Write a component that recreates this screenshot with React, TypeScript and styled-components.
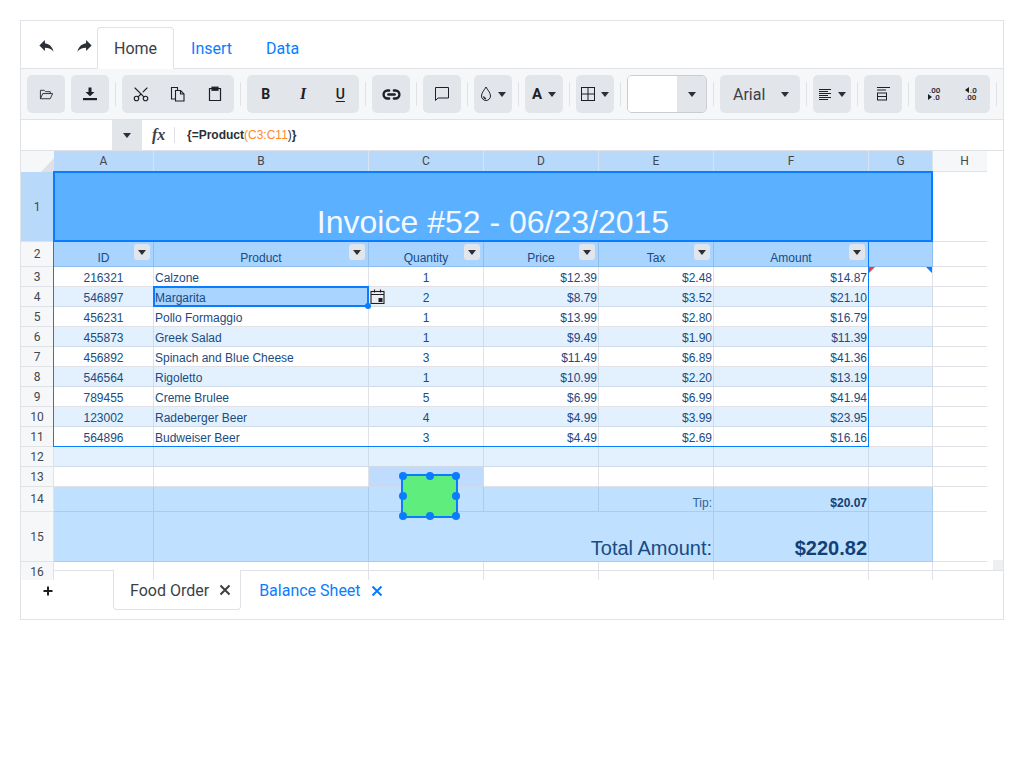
import React from "react";
import styled, {createGlobalStyle} from "styled-components";
import {Scissors, Link2} from "lucide-react";

const GlobalStyle = createGlobalStyle`
	html, body {
		margin: 0;
		padding: 0;
		background: #fff;
		font-family: "Roboto", "Liberation Sans", sans-serif;
	}
`;

const BLUE = "#0a7cff";
const LINE = "#e0e2e8";
const BTN = "#e2e5ea";
const INK = "#1d2026";
const CELL_INK = "#1a4b82";

const COLS = ["A", "B", "C", "D", "E", "F", "G", "H"];

const ORDERS = [
  ["216321", "Calzone", "1", "$12.39", "$2.48", "$14.87"],
  ["546897", "Margarita", "2", "$8.79", "$3.52", "$21.10"],
  ["456231", "Pollo Formaggio", "1", "$13.99", "$2.80", "$16.79"],
  ["455873", "Greek Salad", "1", "$9.49", "$1.90", "$11.39"],
  ["456892", "Spinach and Blue Cheese", "3", "$11.49", "$6.89", "$41.36"],
  ["546564", "Rigoletto", "1", "$10.99", "$2.20", "$13.19"],
  ["789455", "Creme Brulee", "5", "$6.99", "$6.99", "$41.94"],
  ["123002", "Radeberger Beer", "4", "$4.99", "$3.99", "$23.95"],
  ["564896", "Budweiser Beer", "3", "$4.49", "$2.69", "$16.16"],
];

const HEADINGS = ["ID", "Product", "Quantity", "Price", "Tax", "Amount"];
const HANDLES = [
  [0, 0], [50, 0], [100, 0],
  [0, 50], [100, 50],
  [0, 100], [50, 100], [100, 100],
];

const Caret = () => <CaretShape/>;

const Filter = () => (
  <FilterButton><CaretShape/></FilterButton>
);

const Row = ({n, children}: {n: number; children: React.ReactNode}) => (
  <>
    <RowHead $active={n === 1}>{n}</RowHead>
    {children}
  </>
);

export default function App() {
  return (
    <Page>
      <GlobalStyle/>
      <Sheet>
        <TabBar>
          <HistoryButton>
            <svg width="19" height="19" viewBox="0 0 24 24" fill="#2b2f36"><path d="M10 9V5l-7 7 7 7v-4.1c5 0 8.5 1.6 11 5.1-1-5-4-10-11-11z"/></svg>
          </HistoryButton>
          <HistoryButton>
            <svg width="19" height="19" viewBox="0 0 24 24" fill="#2b2f36"><path d="M14 9V5l7 7-7 7v-4.1c-5 0-8.5 1.6-11 5.1 1-5 4-10 11-11z"/></svg>
          </HistoryButton>
          <Tabs>
            <Tab $active>Home</Tab>
            <Tab>Insert</Tab>
            <Tab>Data</Tab>
          </Tabs>
        </TabBar>

        <Toolbar>
          <Group>
            <ToolButton>
              <svg width="15" height="15" viewBox="0 0 16 16" fill="none" stroke="#2b2f36" strokeWidth="1"><path d="M1.5 12.5v-9h4L7 5h5v2"/><path d="M1.5 12.5 4 7h10.5L12 12.5z"/></svg>
            </ToolButton>
          </Group>
          <Group>
            <ToolButton>
              <svg width="16" height="16" viewBox="0 0 16 16" fill="#1d2026"><path d="M6.5 1.5h3V6h3L8 10.2 3.5 6h3z"/><rect x="1" y="12" width="14" height="2.2"/></svg>
            </ToolButton>
          </Group>
          <Sep/>
          <Group $width={112}>
            <ToolButton><Scissors size={18} color="#1d2026" strokeWidth={1.5} style={{transform: "rotate(-90deg)"}}/></ToolButton>
            <ToolButton>
              <svg width="16" height="16" viewBox="0 0 16 16" fill="none" stroke="#1d2026" strokeWidth="1.1"><path d="M5 13H1.500V1.500h6V4"/><path d="M5.500 4.500h5l3.500 3.500v7H5.500z"/><path d="M10.500 4.500V8H14"/></svg>
            </ToolButton>
            <ToolButton>
              <svg width="16" height="16" viewBox="0 0 16 16" fill="none" stroke="#1d2026" strokeWidth="1.2"><path d="M5 2.500H2.500v12h11v-12H11"/><rect x="5" y="1.200" width="6" height="3" fill="#1d2026"/></svg>
            </ToolButton>
          </Group>
          <Sep/>
          <Group $width={112}>
            <ToolButton><BoldLabel>B</BoldLabel></ToolButton>
            <ToolButton><ItalicLabel>I</ItalicLabel></ToolButton>
            <ToolButton><UnderLabel>U</UnderLabel></ToolButton>
          </Group>
          <Sep/>
          <Group>
            <ToolButton><Link2 size={19} color="#1d2026" strokeWidth={3}/></ToolButton>
          </Group>
          <Sep/>
          <Group>
            <ToolButton>
              <svg width="16" height="16" viewBox="0 0 16 16" fill="none" stroke="#1d2026" strokeWidth="1"><path d="M1.500 1.500h13v10.500H4L1.500 14.500z"/></svg>
            </ToolButton>
          </Group>
          <Sep/>
          <Group>
            <SplitButton>
              <svg width="12" height="16" viewBox="0 0 12 16" fill="none" stroke="#1d2026" strokeWidth="1"><path d="M6 1C4.500 4 1.500 6.500 1.500 10a4.500 4.500 0 0 0 9 0C10.500 6.500 7.500 4 6 1z"/><path d="M3.500 10.500c.3 1.300 1.200 2 2.500 2.200" strokeWidth="1.400"/></svg>
              <Caret/>
            </SplitButton>
          </Group>
          <Sep/>
          <Group>
            <SplitButton><FontColorLabel>A</FontColorLabel><Caret/></SplitButton>
          </Group>
          <Sep/>
          <Group>
            <SplitButton>
              <svg width="14" height="14" viewBox="0 0 14 14" fill="none" stroke="#1d2026" strokeWidth="1"><rect x=".5" y=".5" width="13" height="13"/><path d="M7 .5v13M.5 7h13"/></svg>
              <Caret/>
            </SplitButton>
          </Group>
          <Sep/>
          <SizeCombo>
            <SizeInput/>
            <SizeArrow><Caret/></SizeArrow>
          </SizeCombo>
          <Sep/>
          <FontButton><span>Arial</span><Caret/></FontButton>
          <Sep/>
          <Group>
            <SplitButton>
              <svg width="13" height="13" viewBox="0 0 13 13" stroke="#1d2026" strokeWidth="1"><path d="M0 1.500h12M0 3.500h9M0 5.500h12M0 7.500h9M0 9.500h12M0 11.500h9"/></svg>
              <Caret/>
            </SplitButton>
          </Group>
          <Sep/>
          <Group>
            <ToolButton>
              <svg width="15" height="14" viewBox="0 0 15 14" fill="none" stroke="#1d2026" strokeWidth="1"><path d="M1 .5h13M1 3h9"/><rect x="1.500" y="6" width="9" height="7"/><path d="M1.500 9.500h9"/></svg>
            </ToolButton>
          </Group>
          <Sep/>
          <Group $width={75}>
            <ToolButton>
              <svg width="14" height="22" viewBox="0 0 14 22" fill={INK} fontSize="8" fontFamily="Roboto, sans-serif" fontWeight="500">
                <text x="2" y="10">.00</text>
                <path d="M1 11l4 3-4 3z"/>
                <text x="6" y="17">.0</text>
              </svg>
            </ToolButton>
            <ToolButton>
              <svg width="14" height="22" viewBox="0 0 14 22" fill={INK} fontSize="8" fontFamily="Roboto, sans-serif" fontWeight="500">
                <path d="M5 4 1 7l4 3z"/>
                <text x="6" y="10">.0</text>
                <text x="1" y="17">.00</text>
              </svg>
            </ToolButton>
          </Group>
          <Sep/>
        </Toolbar>

        <FormulaBar>
          <NameBox/>
          <NameArrow><Caret/></NameArrow>
          <FxLabel>fx</FxLabel>
          <FormulaText>
            <b>{"{=Product"}</b><Ref>(C3:C11</Ref>)<b>{"}"}</b>
          </FormulaText>
        </FormulaBar>

        <GridWrap>
          <Grid>
            <Corner/>
            {COLS.map((c) => <ColHead key={c} $active={c !== "H"}>{c}</ColHead>)}

            <Row n={1}>
              <TitleCell>Invoice #52 - 06/23/2015</TitleCell>
              <Cell/>
            </Row>

            <Row n={2}>
              {HEADINGS.map((h) => (
                <HeadingCell key={h}>{h}<Filter/></HeadingCell>
              ))}
              <HeadingCell/>
              <Cell/>
            </Row>

            {ORDERS.map((o, i) => (
              <Row key={o[0]} n={i + 3}>
                <Cell $bg={i % 2 ? "#e3f1fe" : undefined} $align="center">{o[0]}</Cell>
                <Cell $bg={i === 1 ? "#a8d4ff" : i % 2 ? "#e3f1fe" : undefined}>{o[1]}</Cell>
                <Cell $bg={i % 2 ? "#e3f1fe" : undefined} $align="center">{o[2]}</Cell>
                <Cell $bg={i % 2 ? "#e3f1fe" : undefined} $align="right">{o[3]}</Cell>
                <Cell $bg={i % 2 ? "#e3f1fe" : undefined} $align="right">{o[4]}</Cell>
                <Cell $bg={i % 2 ? "#e3f1fe" : undefined} $align="right">{o[5]}</Cell>
                <Cell $bg={i % 2 ? "#e3f1fe" : undefined}/>
                <Cell/>
              </Row>
            ))}

            <Row n={12}>
              {COLS.slice(0, 7).map((c) => <Cell key={c} $bg="#e3f1fe"/>)}
              <Cell/>
            </Row>

            <Row n={13}>
              <Cell/><Cell/><Cell $bg="#bfdcff"/><Cell/><Cell/><Cell/><Cell/><Cell/>
            </Row>

            <Row n={14}>
              <TotalCell/><TotalCell/><TotalCell/><TotalCell/>
              <TotalCell $align="right" $muted>Tip:</TotalCell>
              <TotalCell $align="right"><b>$20.07</b></TotalCell>
              <TotalCell/>
              <Cell/>
            </Row>

            <Row n={15}>
              <TotalCell/><TotalCell/>
              <GrandLabel>Total Amount:</GrandLabel>
              <GrandAmount>$220.82</GrandAmount>
              <TotalCell/>
              <Cell/>
            </Row>

            <Row n={16}>
              {COLS.map((c) => <Cell key={c}/>)}
            </Row>
          </Grid>

          <TitleOutline/>
          <RangeOutline/>
          <CellCursor/>
          <DatePicker>
            <svg width="15" height="15" viewBox="0 0 15 15" fill="none" stroke="#1d2026" strokeWidth="1.100"><rect x="1" y="2.500" width="13" height="12"/><path d="M1 5.500h13M4.500 .5v3M10.500 .5v3"/><rect x="8.500" y="9" width="4" height="4" fill="#1d2026" stroke="none"/></svg>
          </DatePicker>
          <CursorDot/>
          <CommentMark $side="left"/>
          <CommentMark $side="right"/>
          <Shape>
            {HANDLES.map(([x, y]) => <Handle key={`${x}-${y}`} $x={x} $y={y}/>)}
          </Shape>
          <ScrollCorner/>
        </GridWrap>

        <SheetBar>
          <AddSheet>
            <svg width="12" height="12" viewBox="0 0 12 12" stroke="#1d2026" strokeWidth="2"><path d="M6 1.500v9M1.500 6h9"/></svg>
          </AddSheet>
          <SheetTab $active>
            Food Order
            <svg width="12" height="12" viewBox="0 0 12 12" stroke="#3b3f46" strokeWidth="2"><path d="M1.500 1.500l9 9M10.500 1.500l-9 9"/></svg>
          </SheetTab>
          <SheetTab>
            Balance Sheet
            <svg width="12" height="12" viewBox="0 0 12 12" stroke={BLUE} strokeWidth="2"><path d="M1.500 1.500l9 9M10.500 1.500l-9 9"/></svg>
          </SheetTab>
          <SheetRest/>
        </SheetBar>
      </Sheet>
    </Page>
  );
}

const Page = styled.div`
	padding: 20px;
	width: 1024px;
	height: 768px;
	box-sizing: border-box;
	overflow: hidden;
`;

const Sheet = styled.div`
	width: 984px;
	height: 600px;
	box-sizing: border-box;
	border: 1px solid ${LINE};
	display: flex;
	flex-direction: column;
`;

const TabBar = styled.div`
	display: flex;
	align-items: flex-end;
	height: 48px;
	box-sizing: border-box;
	padding-left: 6px;
	border-bottom: 1px solid ${LINE};
`;

const HistoryButton = styled.div`
	width: 38px;
	height: 38px;
	margin-bottom: 4px;
	display: flex;
	align-items: center;
	justify-content: center;
`;

const Tabs = styled.div`
	display: flex;
	margin-left: -6px;
`;

const Tab = styled.div<{ $active?: boolean }>`
	height: 42px;
	box-sizing: border-box;
	padding: 0 16px;
	margin-bottom: -1px;
	display: flex;
	align-items: center;
	font-size: 16px;
	color: ${(p) => (p.$active ? "#3b3f46" : BLUE)};
	background: ${(p) => (p.$active ? "#fff" : "transparent")};
	border: 1px solid ${(p) => (p.$active ? LINE : "transparent")};
	border-bottom: 1px solid ${(p) => (p.$active ? "#fff" : "transparent")};
	border-radius: 4px 4px 0 0;
`;

const Toolbar = styled.div`
	height: 51px;
	box-sizing: border-box;
	padding-left: 6px;
	display: flex;
	align-items: center;
	overflow: hidden;
	background: #f6f7f9;
	border-bottom: 1px solid ${LINE};
	& > * {
		flex-shrink: 0;
	}
`;

const Group = styled.div<{ $width?: number }>`
	display: flex;
	width: ${(p) => p.$width || 38}px;
	height: 38px;
	background: ${BTN};
	border-radius: 5px;
	& + & {
		margin-left: 6px;
	}
`;

const ToolButton = styled.div`
	flex: 1;
	height: 38px;
	display: flex;
	align-items: center;
	justify-content: center;
	color: ${INK};
`;

const SplitButton = styled(ToolButton)`
	gap: 6px;
`;

const Sep = styled.div`
	width: 1px;
	height: 24px;
	margin: 0 6px;
	background: #dfe1e6;
`;

const CaretShape = styled.span`
	display: inline-block;
	width: 0;
	height: 0;
	border-left: 4px solid transparent;
	border-right: 4px solid transparent;
	border-top: 5.5px solid #2b2f36;
`;

const BoldLabel = styled.span`
	font-size: 14px;
	font-weight: 700;
`;

const ItalicLabel = styled.span`
	font-family: "Liberation Serif", serif;
	font-size: 16px;
	font-style: italic;
	font-weight: 700;
`;

const UnderLabel = styled.span`
	font-size: 14px;
	font-weight: 500;
	text-decoration: underline;
	text-underline-offset: 2px;
`;

const FontColorLabel = styled.span`
	font-size: 15px;
	font-weight: 700;
`;

const SizeCombo = styled.div`
	width: 80px;
	height: 38px;
	box-sizing: border-box;
	display: flex;
	border: 1px solid #c9ccd3;
	border-radius: 5px;
	overflow: hidden;
`;

const SizeInput = styled.div`
	width: 49px;
	background: #fff;
`;

const SizeArrow = styled.div`
	flex: 1;
	display: flex;
	align-items: center;
	justify-content: center;
	background: ${BTN};
`;

const FontButton = styled.div`
	width: 80px;
	height: 38px;
	box-sizing: border-box;
	padding: 0 11px 0 13px;
	display: flex;
	align-items: center;
	justify-content: space-between;
	background: ${BTN};
	border-radius: 5px;
	font-size: 16px;
	color: #3b3f46;
`;

const FormulaBar = styled.div`
	height: 31px;
	box-sizing: border-box;
	display: flex;
	align-items: center;
	border-bottom: 1px solid ${LINE};
`;

const NameBox = styled.div`
	width: 91px;
`;

const NameArrow = styled.div`
	width: 30px;
	height: 30px;
	display: flex;
	align-items: center;
	justify-content: center;
	background: ${BTN};
`;

const FxLabel = styled.div`
	width: 33px;
	height: 16px;
	line-height: 16px;
	box-sizing: border-box;
	padding-left: 10px;
	border-right: 1px solid #dfe1e6;
	font-family: "Liberation Serif", serif;
	font-style: italic;
	font-weight: 700;
	font-size: 16px;
	color: #3b3f46;
`;

const FormulaText = styled.div`
	margin-left: 12px;
	font-family: "Liberation Sans", Arial, sans-serif;
	font-size: 12px;
	color: #2b2f36;
`;

const Ref = styled.span`
	color: #ff8a2b;
`;

const GridWrap = styled.div`
	position: relative;
	height: 429px;
	overflow: hidden;
`;

const Grid = styled.div`
	display: grid;
	grid-template-columns: 33px 100px 215px 115px 115px 115px 155px 64px 64px;
	grid-template-rows: 21px 70px 25px repeat(11, 20px) 25px 50px 20px;
	width: 966px;
	overflow: hidden;
	font-family: "Liberation Sans", Arial, sans-serif;
	font-size: 12px;
`;

const Corner = styled.div`
	position: relative;
	box-sizing: border-box;
	background: #f6f7f9;
	&::after {
		content: "";
		position: absolute;
		right: 0;
		bottom: 0;
		border-bottom: 14px solid #dfe1e6;
		border-left: 13px solid transparent;
	}
`;

const ColHead = styled.div<{ $active?: boolean }>`
	box-sizing: border-box;
	display: flex;
	align-items: center;
	justify-content: center;
	font-family: "Roboto", sans-serif;
	color: #43474f;
	background: ${(p) => (p.$active ? "#b9d9fb" : "#f6f7f9")};
	border-right: 1px solid ${(p) => (p.$active ? "#d5e3f2" : LINE)};
	border-bottom: 1px solid ${LINE};
`;

const RowHead = styled.div<{ $active?: boolean }>`
	box-sizing: border-box;
	display: flex;
	align-items: center;
	justify-content: center;
	font-family: "Roboto", sans-serif;
	color: #43474f;
	background: ${(p) => (p.$active ? "#b9d9fb" : "#f6f7f9")};
	border-right: 1px solid ${LINE};
	border-bottom: 1px solid ${LINE};
`;

const Cell = styled.div<{ $bg?: string; $align?: "left" | "center" | "right" }>`
	box-sizing: border-box;
	min-width: 0;
	padding: 0 1px;
	display: flex;
	align-items: flex-end;
	justify-content: ${(p) => (p.$align === "center" ? "center" : p.$align === "right" ? "flex-end" : "flex-start")};
	line-height: 16px;
	white-space: nowrap;
	color: ${CELL_INK};
	background: ${(p) => p.$bg || "#fff"};
	border-right: 1px solid ${(p) => (p.$bg ? "#cfdbe8" : LINE)};
	border-bottom: 1px solid ${(p) => (p.$bg ? "#cfdbe8" : LINE)};
`;

const TitleCell = styled.div`
	grid-column: span 7;
	box-sizing: border-box;
	padding-right: 1px;
	display: flex;
	align-items: flex-end;
	justify-content: center;
	font-size: 32px;
	line-height: 40px;
	color: #f4f9ff;
	background: #5bb0ff;
`;

const HeadingCell = styled.div`
	position: relative;
	box-sizing: border-box;
	display: flex;
	align-items: flex-end;
	justify-content: center;
	line-height: 15px;
	color: ${CELL_INK};
	background: #a8d4ff;
	border-right: 1px solid #8dbfee;
	border-bottom: 1px solid #8dbfee;
`;

const FilterButton = styled.div`
	position: absolute;
	top: 2px;
	right: 3px;
	width: 16px;
	height: 16px;
	display: flex;
	align-items: center;
	justify-content: center;
	background: ${BTN};
	border-radius: 3px;
`;

const TotalCell = styled(Cell)<{ $muted?: boolean }>`
	background: #bfe0ff;
	border-right: 1px solid #a9cdee;
	border-bottom: 1px solid #a9cdee;
	color: ${(p) => (p.$muted ? "#2f6496" : "#123f75")};
`;

const GrandLabel = styled(TotalCell)`
	grid-column: span 3;
	justify-content: flex-end;
	font-size: 20px;
	line-height: 25px;
	color: ${CELL_INK};
`;

const GrandAmount = styled(TotalCell)`
	justify-content: flex-end;
	font-size: 20px;
	line-height: 25px;
	font-weight: 700;
`;

const TitleOutline = styled.div`
	position: absolute;
	left: 32px;
	top: 20px;
	width: 880px;
	height: 71px;
	box-sizing: border-box;
	border: 2px solid ${BLUE};
	pointer-events: none;
`;

const RangeOutline = styled.div`
	position: absolute;
	left: 32px;
	top: 90px;
	width: 816px;
	height: 206px;
	box-sizing: border-box;
	border: 1px solid ${BLUE};
	pointer-events: none;
`;

const CellCursor = styled.div`
	position: absolute;
	left: 132px;
	top: 135px;
	width: 216px;
	height: 21px;
	box-sizing: border-box;
	border: 2px solid ${BLUE};
`;

const CursorDot = styled.div`
	position: absolute;
	left: 344px;
	top: 152px;
	width: 6px;
	height: 6px;
	border-radius: 50%;
	background: ${BLUE};
`;

const DatePicker = styled.div`
	position: absolute;
	left: 348px;
	top: 136px;
	width: 16px;
	height: 18px;
	display: flex;
	align-items: center;
	justify-content: center;
	background: #eceef1;
`;

const CommentMark = styled.div<{ $side: "left" | "right" }>`
	position: absolute;
	top: 116px;
	width: 0;
	height: 0;
	${(p) => (p.$side === "left"
    ? `left: 848px; border-top: 6px solid #e8404a; border-right: 6px solid transparent;`
    : `left: 905px; border-top: 6px solid ${BLUE}; border-left: 6px solid transparent;`)}
`;

const Shape = styled.div`
	position: absolute;
	left: 380px;
	top: 323px;
	width: 57px;
	height: 44px;
	box-sizing: border-box;
	background: #5fee7d;
	border: 2px solid ${BLUE};
`;

const Handle = styled.div<{ $x: number; $y: number }>`
	position: absolute;
	left: ${(p) => p.$x}%;
	top: ${(p) => p.$y}%;
	width: 8px;
	height: 8px;
	margin: -4px 0 0 -4px;
	border-radius: 50%;
	background: ${BLUE};
`;

const ScrollCorner = styled.div`
	position: absolute;
	right: 0;
	top: 409px;
	width: 10px;
	height: 10px;
	background: #eeeff1;
`;

const SheetBar = styled.div`
	position: relative;
	height: 49px;
	margin-top: -10px;
	display: flex;
	align-items: flex-start;
`;

const AddSheet = styled.div`
	position: relative;
	width: 92px;
	height: 40px;
	box-sizing: border-box;
	padding: 1px 0 0 21px;
	display: flex;
	align-items: center;
	&::before {
		content: "";
		position: absolute;
		left: 33px;
		right: 0;
		top: 0;
		height: 1px;
		background: ${LINE};
	}
`;

const SheetTab = styled.div<{ $active?: boolean }>`
	height: 40px;
	box-sizing: border-box;
	padding: ${(p) => (p.$active ? "1px 9px 0 16px" : "0 10px 0 18px")};
	display: flex;
	align-items: center;
	gap: 10px;
	font-size: 16px;
	color: ${(p) => (p.$active ? "#3b3f46" : BLUE)};
	border: 1px solid ${LINE};
	${(p) => (p.$active
    ? "border-top: 0; border-radius: 0 0 4px 4px;"
    : "border-width: 1px 0 0 0;")}
`;

const SheetRest = styled.div`
	flex: 1;
	height: 1px;
	background: ${LINE};
`;
